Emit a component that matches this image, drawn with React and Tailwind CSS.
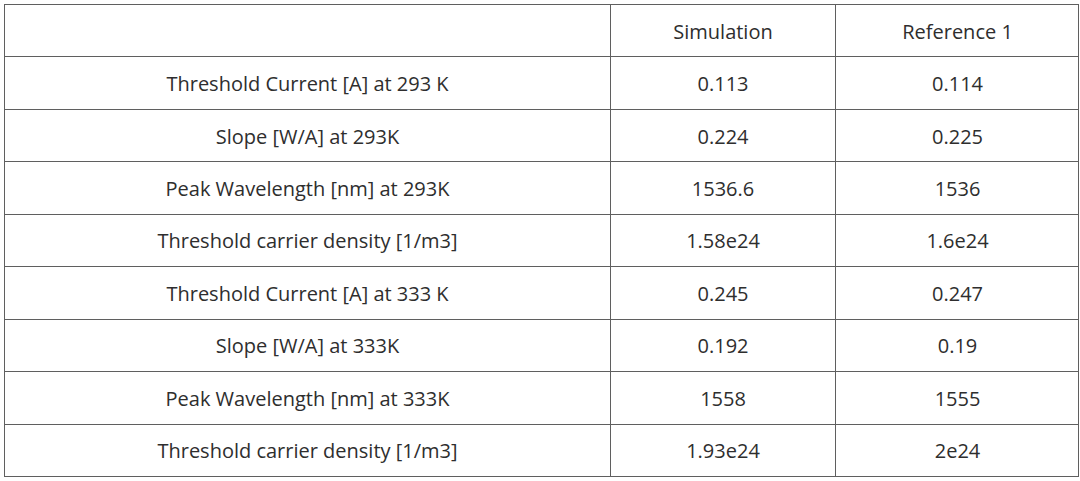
const rows = [
  ["Threshold Current [A] at 293 K", "0.113", "0.114"],
  ["Slope [W/A] at 293K", "0.224", "0.225"],
  ["Peak Wavelength [nm] at 293K", "1536.6", "1536"],
  ["Threshold carrier density [1/m3]", "1.58e24", "1.6e24"],
  ["Threshold Current [A] at 333 K", "0.245", "0.247"],
  ["Slope [W/A] at 333K", "0.192", "0.19"],
  ["Peak Wavelength [nm] at 333K", "1558", "1555"],
  ["Threshold carrier density [1/m3]", "1.93e24", "2e24"],
];

function Cell({ children, last }) {
  return (
    <div
      className={
        "flex items-center justify-center pt-[2px] border-t border-[#5f5f5f] " +
        (last ? "" : "border-r")
      }
    >
      {children}
    </div>
  );
}

export default function App() {
  return (
    <div className="w-[1080px] h-[481px] bg-white pt-[4px] pl-[4px]">
      <div
        className="grid grid-cols-[606px_225px_243px] grid-rows-9 w-[1075px] h-[473px] border-l border-r border-b border-[#5f5f5f] text-[#2e2e2e] text-[20px]"
        style={{ fontFamily: '"Open Sans", "Noto Sans", sans-serif' }}
      >
        <Cell></Cell>
        <Cell>Simulation</Cell>
        <Cell last>Reference 1</Cell>
        {rows.map((r, i) => [
          <Cell key={i + "a"}>{r[0]}</Cell>,
          <Cell key={i + "b"}>{r[1]}</Cell>,
          <Cell key={i + "c"} last>{r[2]}</Cell>,
        ])}
      </div>
    </div>
  );
}
